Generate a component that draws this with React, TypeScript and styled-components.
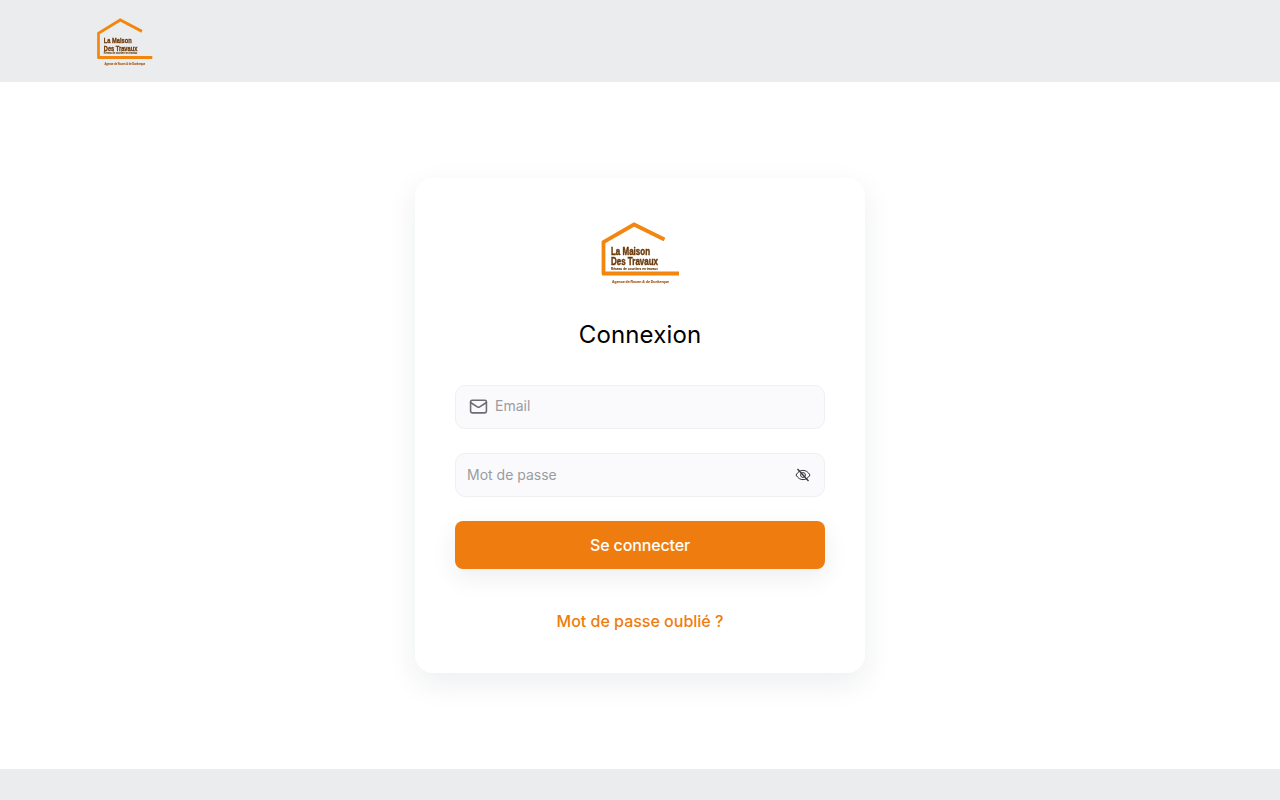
import styled, { createGlobalStyle } from 'styled-components'
import { Mail } from 'lucide-react'

const GlobalStyle = createGlobalStyle`
  * { box-sizing: border-box; }
  html, body { margin: 0; padding: 0; height: 100%; }
  body {
    font-family: Inter, 'Liberation Sans', sans-serif;
    background: #fff;
  }
`;

const Page = styled.div`
  height: 800px;
  display: flex;
  flex-direction: column;
  overflow: hidden;
`;

const TopBar = styled.header`
  height: 82px;
  flex: none;
  background: #ebecee;
  display: flex;
  align-items: center;
  padding: 3px 0 0 96px;
`;

const Main = styled.main`
  flex: 1;
  display: flex;
  justify-content: center;
  padding-top: 96px;
  background: #fff;
`;

const Card = styled.section`
  width: 450px;
  height: 495px;
  background: #fff;
  border-radius: 18px;
  padding: 44px 40px 0;
  box-shadow: 0 10px 30px rgba(30, 40, 60, 0.08);
  display: flex;
  flex-direction: column;
`;

const LogoWrap = styled.div`
  display: flex;
  justify-content: center;
  height: 64px;
`;

const Title = styled.h1`
  margin: 33px 0 0;
  font-size: 24px;
  line-height: 32px;
  font-weight: 400;
  letter-spacing: 0.15px;
  text-align: center;
  color: #000;
`;

const Field = styled.div<{ $top: number }>`
  height: 44px;
  margin-top: ${(p) => p.$top}px;
  background: #fafafc;
  border: 1px solid #f0f0f3;
  border-radius: 10px;
  display: flex;
  align-items: center;
  padding: 0 13px 0 11px;
  gap: 6px;
  font-size: 14px;
  color: #9b9ca1;
`;

const Placeholder = styled.span<{ $lift: number }>`
  flex: 1;
  line-height: 20px;
  margin-top: ${(p) => p.$lift}px;
`;

const MailIcon = styled(Mail)`
  color: #6b6d73;
  margin: -2px 1px 0 2px;
`;

const SubmitButton = styled.button`
  height: 48px;
  margin-top: 24px;
  border: 0;
  border-radius: 8px;
  background: #ef7c0e;
  color: #fff;
  font-family: inherit;
  font-size: 16px;
  font-weight: 500;
  letter-spacing: -0.15px;
  box-shadow: 0 8px 24px rgba(30, 40, 60, 0.08);
`;

const ForgotLink = styled.a`
  margin-top: 40px;
  text-align: center;
  font-size: 16px;
  line-height: 24px;
  font-weight: 500;
  color: #ef7c0e;
`;

const BottomBar = styled.footer`
  height: 31px;
  flex: none;
  background: #ebecee;
`;

const LogoSvg = styled.svg`
  filter: blur(0.35px);
  overflow: visible;
`;

function Logo({ width, height }: { width: number; height: number }) {
  return (
    <LogoSvg width={width} height={height} viewBox="0 0 80 64" preserveAspectRatio="none">
      <path d="M3.5 52V20L34 2.5L64.5 17.5M2 51.5H79" fill="none" stroke="#f2860f" strokeWidth="3.8" />
      <g fontFamily="'Liberation Sans', sans-serif" fontWeight="700" fill="#6b3a0a" stroke="#6b3a0a" strokeWidth="0.45">
        <text x="11" y="33" fontSize="10.5" textLength="39" lengthAdjust="spacingAndGlyphs">La Maison</text>
        <text x="11" y="42.5" fontSize="10.5" textLength="47" lengthAdjust="spacingAndGlyphs">Des Travaux</text>
        <text x="11" y="47.5" fontSize="4" textLength="47" lengthAdjust="spacingAndGlyphs" strokeWidth="0.1">Réseau de courtiers en travaux</text>
        <text x="12" y="61" fontSize="4.4" textLength="57" lengthAdjust="spacingAndGlyphs" fill="#a5541a" stroke="#a5541a" strokeWidth="0.15">Agence de Rouen & de Dunkerque</text>
      </g>
    </LogoSvg>
  )
}

function EyeSlash() {
  return (
    <svg width="16" height="16" viewBox="0 0 16 16" fill="none" stroke="#333438" strokeWidth="1">
      <path d="M1 8C3 4.6 5.4 3.4 8 3.4S13 4.6 15 8C13 11.4 10.6 12.6 8 12.6S3 11.4 1 8Z" />
      <circle cx="8" cy="8" r="2.4" />
      <path d="M2.5 2L13.5 14" strokeWidth="1.3" />
    </svg>
  )
}

function App() {
  return (
    <Page>
      <GlobalStyle />
      <TopBar>
        <Logo width={57} height={49} />
      </TopBar>
      <Main>
        <Card>
          <LogoWrap>
            <Logo width={80} height={64} />
          </LogoWrap>
          <Title>Connexion</Title>
          <Field $top={34}>
            <MailIcon size={19} strokeWidth={2} />
            <Placeholder $lift={-3}>Email</Placeholder>
          </Field>
          <Field $top={24}>
            <Placeholder $lift={-1}>Mot de passe</Placeholder>
            <EyeSlash />
          </Field>
          <SubmitButton type="button">Se connecter</SubmitButton>
          <ForgotLink>Mot de passe oublié ?</ForgotLink>
        </Card>
      </Main>
      <BottomBar />
    </Page>
  )
}

export default App
